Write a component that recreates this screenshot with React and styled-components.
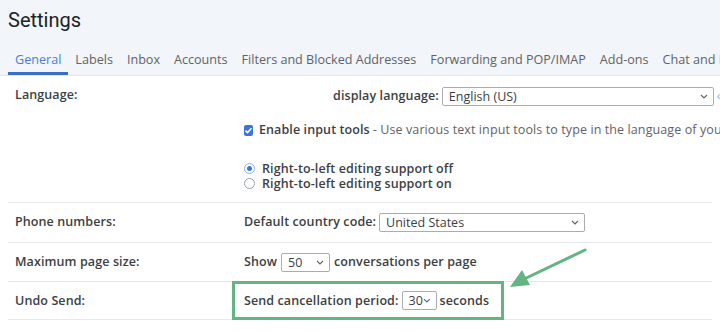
import styled, { createGlobalStyle } from "styled-components";

const GlobalStyle = createGlobalStyle`
  html, body {
    margin: 0;
    padding: 0;
    background: #ffffff;
    overflow: hidden;
  }
  body {
    width: 720px;
    height: 331px;
    font-family: "Open Sans", Roboto, "Liberation Sans", Arial, sans-serif;
    color: #3c4043;
  }
`;

const Page = styled.div`
  position: relative;
  width: 720px;
  height: 331px;
  overflow: hidden;
`;

const Header = styled.header`
  background: #f2f5f9;
  border-bottom: 1px solid #e3e6ea;
  padding-top: 8px;
`;

const Title = styled.h1`
  margin: 0 0 0 8px;
  font-family: Roboto, "Liberation Sans", Arial, sans-serif;
  font-size: 20px;
  line-height: 24px;
  font-weight: 400;
  color: #202124;
`;

const Tabs = styled.nav`
  display: flex;
  padding: 20px 0 0 8px;
  white-space: nowrap;
`;

const Tab = styled.span`
  padding: 0 7px 4px;
  font-size: 12.6px;
  line-height: 16px;
  color: ${(p) => (p.active ? "#4a7fd4" : "#5f6368")};
  border-bottom: 3px solid ${(p) => (p.active ? "#3b6fc4" : "transparent")};
`;

const Main = styled.main`
  padding: 0 8px;
`;

const Row = styled.section`
  display: flex;
  align-items: flex-start;
  border-bottom: 1px solid #e6e8eb;
  padding: ${(p) => p.pad || "9px 0"};
`;

const Label = styled.div`
  width: 229px;
  padding-left: 7px;
  flex-shrink: 0;
  font-size: 12.5px;
  letter-spacing: 0.1px;
  line-height: ${(p) => p.lh || "20px"};
  font-weight: 600;
  color: #3c4043;
`;

const Content = styled.div`
  flex: 1;
  min-width: 0;
  display: flex;
  flex-direction: column;
`;

const Line = styled.div`
  display: flex;
  align-items: center;
  gap: ${(p) => p.gap || "4px"};
  margin-top: ${(p) => p.mt || "0"};
  padding-left: ${(p) => p.indent || "0"};
  height: ${(p) => p.h || "20px"};
  line-height: ${(p) => p.h || "20px"};
  white-space: nowrap;
  font-size: 12.5px;
  letter-spacing: 0.1px;
`;

const Strong = styled.span`
  font-weight: 600;
  color: #3c4043;
`;

const Muted = styled.span`
  color: #5f6368;
`;

const SelectBox = styled.div`
  display: flex;
  align-items: center;
  justify-content: space-between;
  box-sizing: border-box;
  width: ${(p) => p.w}px;
  height: 19px;
  padding: 0 5px 0 6px;
  border: 1px solid #a9adb2;
  border-radius: 2px;
  background: #fff;
  font-size: 12.5px;
  line-height: 17px;
  letter-spacing: 0;
  color: #3c4043;
  flex-shrink: 0;
`;

const CheckBox = styled.span`
  display: inline-flex;
  align-items: center;
  justify-content: center;
  width: 11px;
  height: 11px;
  border-radius: 2px;
  background: #3e74d6;
  margin-right: 3px;
`;

const Radio = styled.span`
  box-sizing: border-box;
  display: inline-flex;
  align-items: center;
  justify-content: center;
  width: 11px;
  height: 11px;
  border-radius: 50%;
  border: 1px solid ${(p) => (p.checked ? "#8fb0e8" : "#9aa0a6")};
  background: #fff;
  margin-right: 7px;
  &::after {
    content: "";
    display: ${(p) => (p.checked ? "block" : "none")};
    width: 5px;
    height: 5px;
    border-radius: 50%;
    background: #3e74d6;
  }
`;

const EdgeGlyph = styled.span`
  color: #8ab0e6;
  font-size: 12px;
`;

const Highlight = styled.div`
  display: flex;
  align-items: center;
  gap: 3px;
  box-sizing: border-box;
  height: 39px;
  margin: -1px 0 -1px -12px;
  padding: 0 12px 0 9px;
  border: 3px solid #62b482;
  white-space: nowrap;
  font-size: 12.5px;
  letter-spacing: 0.1px;
`;

const ArrowLayer = styled.svg`
  position: absolute;
  left: 0;
  top: 0;
  pointer-events: none;
`;

function Chevron() {
  return (
    <svg width="8" height="5" viewBox="0 0 8 5">
      <path d="M1 1l3 3 3-3" fill="none" stroke="#5f6368" strokeWidth="1.1" />
    </svg>
  );
}

function Select({ w, value }) {
  return (
    <SelectBox w={w}>
      <span>{value}</span>
      <Chevron />
    </SelectBox>
  );
}

const tabs = [
  "General",
  "Labels",
  "Inbox",
  "Accounts",
  "Filters and Blocked Addresses",
  "Forwarding and POP/IMAP",
  "Add-ons",
  "Chat and Meet",
];

export default function App() {
  return (
    <Page>
      <GlobalStyle />
      <Header>
        <Title>Settings</Title>
        <Tabs>
          {tabs.map((t, i) => (
            <Tab key={t} active={i === 0}>
              {t}
            </Tab>
          ))}
        </Tabs>
      </Header>

      <Main>
        <Row pad="10px 0 11px">
          <Label lh="18px">Language:</Label>
          <Content>
            <Line indent="89px" gap="3px">
              <Strong>display language:</Strong>
              <Select w={272} value="English (US)" />
              <EdgeGlyph>‹</EdgeGlyph>
            </Line>
            <Line mt="14px" gap="3px">
              <CheckBox>
                <svg width="9" height="9" viewBox="0 0 9 9">
                  <path d="M1.5 4.6l2 2 4-4.4" fill="none" stroke="#fff" strokeWidth="1.5" />
                </svg>
              </CheckBox>
              <Strong>Enable input tools</Strong>
              <Muted>- Use various text input tools to type in the language of your choice</Muted>
            </Line>
            <Line mt="21px" h="15px" gap="0">
              <Radio checked />
              <Strong>Right-to-left editing support off</Strong>
            </Line>
            <Line h="15px" gap="0">
              <Radio />
              <Strong>Right-to-left editing support on</Strong>
            </Line>
          </Content>
        </Row>

        <Row pad="9px 0 10px">
          <Label>Phone numbers:</Label>
          <Content>
            <Line gap="3px">
              <Strong>Default country code:</Strong>
              <Select w={206} value="United States" />
            </Line>
          </Content>
        </Row>

        <Row>
          <Label>Maximum page size:</Label>
          <Content>
            <Line gap="4px">
              <Strong>Show</Strong>
              <Select w={49} value="50" />
              <Strong>conversations per page</Strong>
            </Line>
          </Content>
        </Row>

        <Row pad="0">
          <Label lh="37px">Undo Send:</Label>
          <Highlight>
            <Strong>Send cancellation period:</Strong>
            <Select w={35} value="30" />
            <Strong>seconds</Strong>
          </Highlight>
        </Row>
      </Main>

      <ArrowLayer width="720" height="331" viewBox="0 0 720 331">
        <line x1="585" y1="250" x2="520" y2="281" stroke="#62b482" strokeWidth="3" strokeLinecap="round" />
        <polygon points="510,287 530,285 522,270" fill="#62b482" />
      </ArrowLayer>
    </Page>
  );
}
